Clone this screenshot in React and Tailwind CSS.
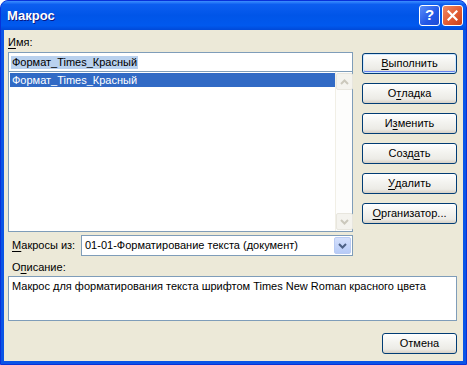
import React from 'react'

const font = "[font-family:'Liberation_Sans',Arial,sans-serif]"

function U({ children }) {
  return <span className="underline underline-offset-[2px] decoration-1">{children}</span>
}

function XpButton({ children, isDefault, className = '' }) {
  return (
    <div
      className={`flex h-[21px] items-center justify-center rounded-[3px] border border-[#003C74] bg-[linear-gradient(to_bottom,#FFFFFF_0%,#F3F3EF_45%,#ECEBE6_80%,#D6D0C5_100%)] text-[11px] text-black ${
        isDefault ? 'shadow-[inset_0_0_0_1px_#CEE7FF,inset_0_-1px_0_1px_#6982EE]' : ''
      } ${className}`}
    >
      {children}
    </div>
  )
}

function Chevron({ color, up }) {
  return (
    <svg width="9" height="6" viewBox="0 0 9 6" className={up ? 'rotate-180' : ''}>
      <path d="M1 1 L4.5 4.5 L8 1" fill="none" stroke={color} strokeWidth="2" />
    </svg>
  )
}

function DisabledArrow({ up }) {
  return (
    <div className="flex h-[17px] w-[17px] items-center justify-center rounded-[2px] border border-[#E8E6DE] bg-[#F4F3EE]">
      <Chevron color="#CBC8BC" up={up} />
    </div>
  )
}

export default function App() {
  return (
    <div className={`flex h-[365px] w-[467px] flex-col rounded-t-[8px] border border-[#0831D9] bg-[#0A54E6] ${font}`}>
      {/* title bar */}
      <div className="flex h-[29px] items-center rounded-t-[7px] bg-[linear-gradient(to_bottom,#3C8EFF_0%,#0C5EF0_12%,#0055E8_50%,#0059EE_85%,#0049D8_100%)] pl-[6px] pr-[3px]">
        <div className="flex-1 text-[13px] font-bold text-white [text-shadow:1px_1px_0_#0A1883]">Макрос</div>
        <div className="flex h-[21px] w-[21px] items-center justify-center rounded-[3px] border border-white bg-[linear-gradient(135deg,#5A8CF8,#2257E6_60%,#1E4CD4)] text-[15px] font-bold text-white">
          ?
        </div>
        <div className="ml-[2px] flex h-[21px] w-[21px] items-center justify-center rounded-[3px] border border-white bg-[linear-gradient(135deg,#F08A66,#E25B32_55%,#C8401C)]">
          <svg width="11" height="11" viewBox="0 0 11 11">
            <path d="M1.5 1.5 L9.5 9.5 M9.5 1.5 L1.5 9.5" stroke="white" strokeWidth="2.2" strokeLinecap="square" />
          </svg>
        </div>
      </div>

      {/* client */}
      <div className="mx-[3px] mb-[3px] flex flex-1 flex-col bg-[#ECE9D8] pl-[4px] pr-[6px] text-[11px] text-black">
        <div className="flex">
          <div className="flex w-[345px] flex-col">
            <div className="h-[22px] pt-[6px] leading-[13px]">
              <U>И</U>мя:
            </div>
            <div className="flex h-[20px] items-center border border-[#7F9DB9] bg-white px-[2px]">
              <span className="bg-[#B9D1EE] px-[1px] leading-[13px]">Формат_Times_Красный</span>
            </div>
            <div className="flex h-[160px] border border-t-0 border-[#7F9DB9] bg-white">
              <div className="flex-1 pl-[1px] pt-[1px]">
                <div className="h-[14px] bg-[#316AC5] pl-[2px] leading-[14px] text-white">Формат_Times_Красный</div>
              </div>
              <div className="flex w-[17px] flex-col justify-between border-l border-[#F1EFE6] bg-[#FDFDFC] pb-[1px] pt-[1px]">
                <DisabledArrow up />
                <DisabledArrow />
              </div>
            </div>
          </div>
          <div className="ml-[9px] flex w-[95px] flex-col gap-[9px] pt-[23px]">
            <XpButton isDefault>
              <U>В</U>ыполнить
            </XpButton>
            <XpButton>
              О<U>т</U>ладка
            </XpButton>
            <XpButton>
              И<U>з</U>менить
            </XpButton>
            <XpButton>
              Созд<U>а</U>ть
            </XpButton>
            <XpButton>
              <U>У</U>далить
            </XpButton>
            <XpButton>
              <U>О</U>рганизатор...
            </XpButton>
          </div>
        </div>

        <div className="mt-[3px] flex h-[21px] items-center">
          <div className="w-[73px] pl-[4px]">
            <U>М</U>акросы из:
          </div>
          <div className="flex h-[21px] w-[272px] items-center border border-[#7F9DB9] bg-white pl-[3px] pr-[1px]">
            <span className="flex-1">01-01-Форматирование текста (документ)</span>
            <div className="flex h-[17px] w-[17px] items-center justify-center rounded-[2px] border border-[#B9CBF3] bg-[linear-gradient(to_bottom,#D4E0FC,#B7CBF7)]">
              <Chevron color="#4D6185" />
            </div>
          </div>
        </div>

        <div className="mt-[5px] h-[15px] pl-[4px] leading-[13px]">
          О<U>п</U>исание:
        </div>
        <div className="h-[45px] border border-[#7F9DB9] bg-white px-[3px] pt-[3px] leading-[13px]">
          Макрос для форматирования текста шрифтом Times New Roman красного цвета
        </div>

        <div className="mt-[12px] flex justify-end">
          <XpButton className="w-[75px]">Отмена</XpButton>
        </div>
      </div>
    </div>
  )
}
